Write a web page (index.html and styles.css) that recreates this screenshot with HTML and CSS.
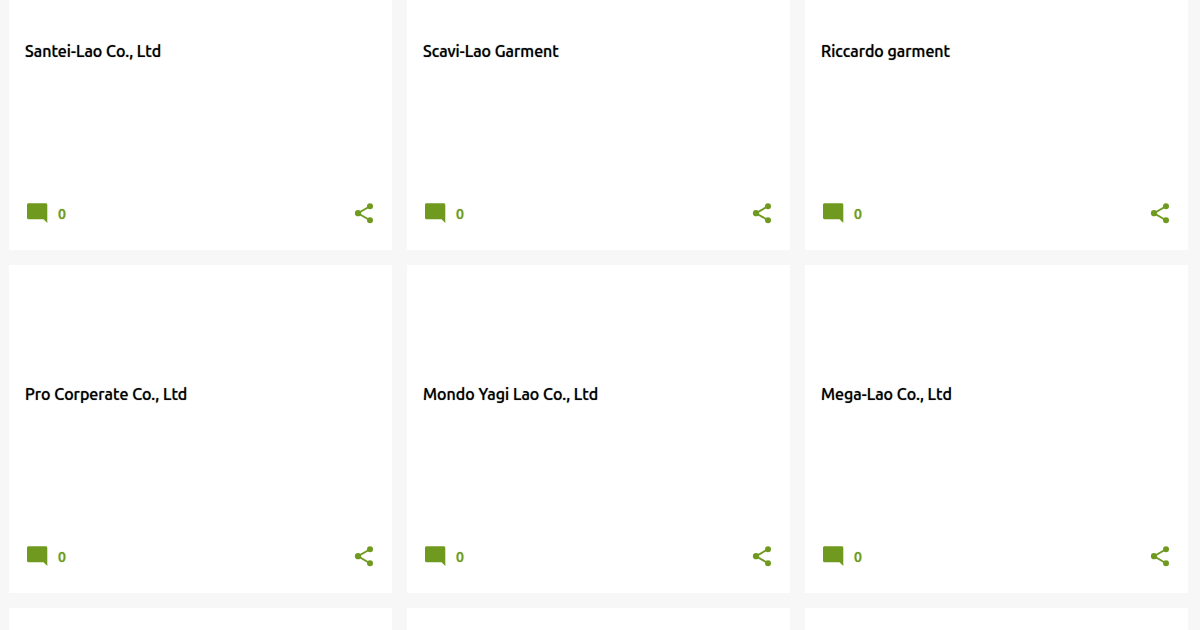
FILE: index.html
```
<!DOCTYPE html>
<html lang="en">
<head>
<title>Garment companies</title>
<meta charset="utf-8">
<meta name="viewport" content="width=device-width, initial-scale=1">
<link rel="stylesheet" href="styles.css">
</head>
<body>

<svg class="sprite" aria-hidden="true">
  <symbol id="ic_comment" viewBox="0 0 24 24">
    <path d="M22.300 22L18.500 18.200H3.500C2.700 18.200 2 17.500 2 16.700V3.800C2 3 2.700 2.300 3.500 2.300H20.800C21.600 2.300 22.300 3 22.300 3.800z"/>
  </symbol>
  <symbol id="ic_share" viewBox="0 0 24 24">
    <path d="M18 5.200L6 12.200l12 7" fill="none" stroke="currentColor" stroke-width="1.900"/>
    <circle cx="18" cy="5.200" r="3"/>
    <circle cx="6" cy="12.200" r="3.100"/>
    <circle cx="18" cy="19.200" r="3"/>
  </symbol>
</svg>

<main class="feed">
  <article class="post">
    <h3 class="post_title"><a href="#">Santei-Lao Co., Ltd</a></h3>
    <div class="post_footer">
      <a class="comments" href="#" aria-label="0 comments"><svg class="icon"><use href="#ic_comment"/></svg><span class="count">0</span></a>
      <button class="share" type="button" aria-label="Share"><svg class="icon"><use href="#ic_share"/></svg></button>
    </div>
  </article>
  <article class="post">
    <h3 class="post_title"><a href="#">Scavi-Lao Garment</a></h3>
    <div class="post_footer">
      <a class="comments" href="#" aria-label="0 comments"><svg class="icon"><use href="#ic_comment"/></svg><span class="count">0</span></a>
      <button class="share" type="button" aria-label="Share"><svg class="icon"><use href="#ic_share"/></svg></button>
    </div>
  </article>
  <article class="post">
    <h3 class="post_title"><a href="#">Riccardo garment</a></h3>
    <div class="post_footer">
      <a class="comments" href="#" aria-label="0 comments"><svg class="icon"><use href="#ic_comment"/></svg><span class="count">0</span></a>
      <button class="share" type="button" aria-label="Share"><svg class="icon"><use href="#ic_share"/></svg></button>
    </div>
  </article>
  <article class="post">
    <h3 class="post_title"><a href="#">Pro Corperate Co., Ltd</a></h3>
    <div class="post_footer">
      <a class="comments" href="#" aria-label="0 comments"><svg class="icon"><use href="#ic_comment"/></svg><span class="count">0</span></a>
      <button class="share" type="button" aria-label="Share"><svg class="icon"><use href="#ic_share"/></svg></button>
    </div>
  </article>
  <article class="post">
    <h3 class="post_title"><a href="#">Mondo Yagi Lao Co., Ltd</a></h3>
    <div class="post_footer">
      <a class="comments" href="#" aria-label="0 comments"><svg class="icon"><use href="#ic_comment"/></svg><span class="count">0</span></a>
      <button class="share" type="button" aria-label="Share"><svg class="icon"><use href="#ic_share"/></svg></button>
    </div>
  </article>
  <article class="post">
    <h3 class="post_title"><a href="#">Mega-Lao Co., Ltd</a></h3>
    <div class="post_footer">
      <a class="comments" href="#" aria-label="0 comments"><svg class="icon"><use href="#ic_comment"/></svg><span class="count">0</span></a>
      <button class="share" type="button" aria-label="Share"><svg class="icon"><use href="#ic_share"/></svg></button>
    </div>
  </article>
  <article class="post"></article>
  <article class="post"></article>
  <article class="post"></article>
</main>

</body>
</html>
```
FILE: styles.css
```
body {
  margin: 0;
  background: #f7f7f7;
  font-family: Ubuntu, "Noto Sans", sans-serif;
}
.sprite {
  display: none;
}
.feed {
  display: grid;
  grid-template-columns: repeat(3, 1fr);
  grid-template-rows: 328px 328px 1fr;
  gap: 15px;
  box-sizing: border-box;
  height: calc(100vh + 78px);
  /* the feed is scrolled part of the way into its first row */
  margin: -78px 12px 0 9px;
}
.post {
  display: flex;
  flex-direction: column;
  background: #fff;
}
.post_title {
  margin: 0;
  padding: 117px 16px 0;
  font-size: 16px;
  font-weight: 500;
  line-height: 24px;
}
.post_title a {
  color: #000;
  text-decoration: none;
  text-shadow: 0 0 1px rgba(0, 0, 0, .6);
}
.post_footer {
  display: flex;
  justify-content: space-between;
  align-items: center;
  margin-top: auto;
  padding: 0 16px 25px;
}
.comments {
  display: flex;
  align-items: center;
  gap: 9px;
  color: #6f9a1f;
  font-size: 14px;
  line-height: 24px;
  text-decoration: none;
}
.count {
  padding-top: 2px;
  font-weight: 500;
  line-height: 22px;
  text-shadow: 0 0 1px currentColor;
}
.share {
  padding: 0;
  border: 0;
  background: none;
  color: #6f9a1f;
  cursor: pointer;
}
.icon {
  display: block;
  width: 24px;
  height: 24px;
  fill: currentColor;
}
```
